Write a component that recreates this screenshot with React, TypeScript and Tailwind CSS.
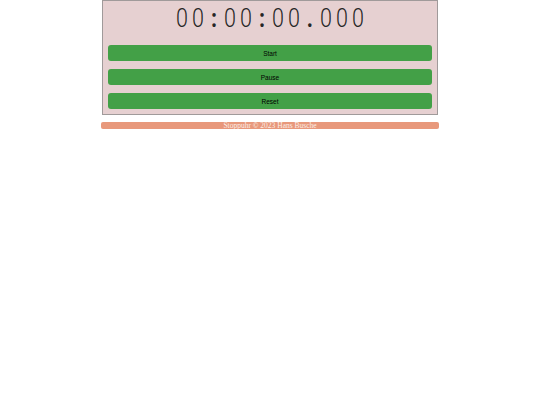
const TIME = '00:00:00.000'

export default function App() {
  const buttons = ['Start', 'Pause', 'Reset']
  return (
    <div className="mx-auto w-[338px]">
      <div className="mx-px border border-[#a09a9a] bg-[#e6d0d1] px-[5px] pb-[5px]">
        <div className="flex h-[36px] items-center justify-center font-['Roboto',sans-serif] text-[25px] font-light text-[#262626]">
          {TIME.split('').map((c, i) => (
            <span
              key={i}
              className={`inline-block w-[16px] scale-x-[0.86] text-center ${c === ':' || c === '.' ? 'font-bold' : ''}`}
            >
              {c}
            </span>
          ))}
        </div>
        <div className="mt-[8px] flex flex-col gap-[8px]">
          {buttons.map((b) => (
            <button
              key={b}
              className="h-[16px] rounded-[3px] bg-[#43a047] pt-px font-['Liberation_Sans',Arial,sans-serif] text-[6.5px] text-black"
            >
              {b}
            </button>
          ))}
        </div>
      </div>
      <footer className="mt-[7px] h-[7px] rounded-[2px] bg-[#e8987b] text-center font-['Liberation_Serif',serif] text-[7.5px] leading-[7px] text-[#fbeee8]">
        Stoppuhr © 2023 Hans Busche
      </footer>
    </div>
  )
}
